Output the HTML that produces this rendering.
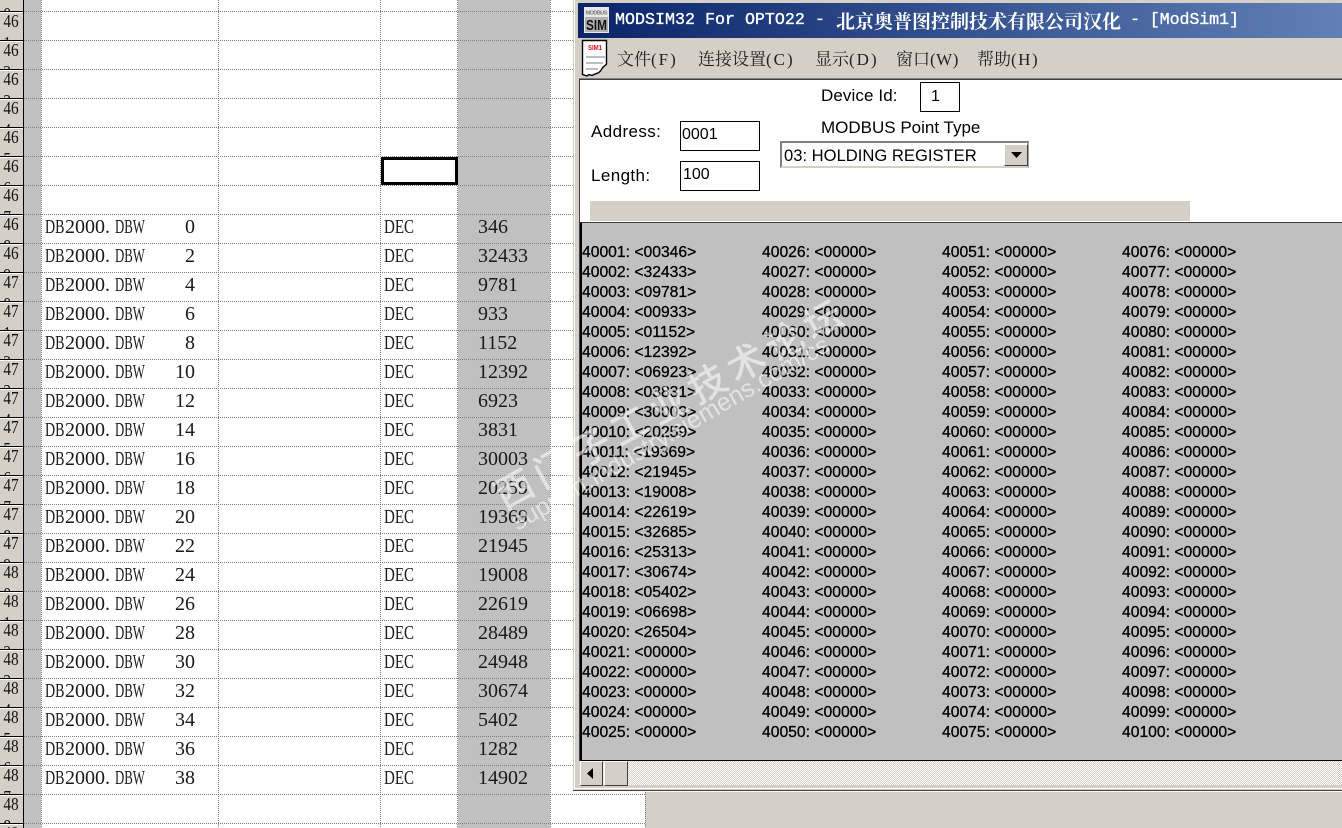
<!DOCTYPE html>
<html><head><meta charset="utf-8"><title>MODSIM32</title>
<style>
html,body{margin:0;padding:0;background:#fff}
#p{position:relative;width:1342px;height:828px;overflow:hidden;background:#fff;font-family:"Liberation Serif","Noto Serif CJK SC",serif;color:#000}
#p div,#p span,#p svg{position:absolute}
.v{width:1px;background:repeating-linear-gradient(to bottom,#808080 0 1px,transparent 1px 2px)}
.h{height:1px;background:repeating-linear-gradient(to right,#808080 0 1px,transparent 1px 2px)}
#rh{left:0;top:-17px;width:23px;height:860px;background:#d4d0c8;overflow:hidden}
#rh b{display:block;box-sizing:border-box;height:29px;width:27px;overflow:hidden;border-bottom:1px solid #000;border-top:1px solid #fff;font:400 18px/22px "Liberation Serif",serif;padding-left:4px;color:#111;transform:scaleX(.85);transform-origin:0 0}
#rh b::before{content:"";display:block;margin-top:-3px}
.t{font-size:20px;line-height:29px;white-space:nowrap;color:#1a1a1a}
.t i{display:inline-block;font-style:normal;transform-origin:0 50%;height:29px;vertical-align:top}
.a{width:20px;transform:scaleX(.7)}
.c{width:30px;transform:scaleX(.64)}
.d{width:30px;transform:scaleX(.75)}
.o{width:10px}
.m{font:400 15.7px/20px "Liberation Sans",sans-serif;white-space:nowrap;top:243px;color:#000;-webkit-text-stroke:.3px #000}
.s{font:400 17px/20px "Liberation Sans",sans-serif;white-space:nowrap;color:#000}
.box{background:#fff;border:1px solid #000;box-sizing:border-box}
.me{font:400 17px/20px "Noto Serif CJK SC",serif;color:#222;top:48px;white-space:nowrap}
.me u{text-decoration:none;font:400 17px/20px "Liberation Serif",serif;letter-spacing:2px}
.ti{color:#fff;top:10px;line-height:22px;white-space:nowrap}
.la{font:400 16.67px/22px "Liberation Mono",monospace;-webkit-text-stroke:.35px #fff}
.wm{color:rgba(255,255,255,.55);white-space:nowrap;transform-origin:0 0}
</style></head><body><div id="p">

<div style="left:24px;top:0;width:17px;height:828px;background:#c0c0c0"></div>
<div style="left:458px;top:0;width:92px;height:828px;background:#c0c0c0"></div>
<div style="left:23px;top:0;width:1px;height:828px;background:#000"></div>

<div id="rh"><b>46<br>0</b><b>46<br>1</b><b>46<br>2</b><b>46<br>3</b><b>46<br>4</b><b>46<br>5</b><b>46<br>6</b><b>46<br>7</b><b>46<br>8</b><b>46<br>9</b><b>47<br>0</b><b>47<br>1</b><b>47<br>2</b><b>47<br>3</b><b>47<br>4</b><b>47<br>5</b><b>47<br>6</b><b>47<br>7</b><b>47<br>8</b><b>47<br>9</b><b>48<br>0</b><b>48<br>1</b><b>48<br>2</b><b>48<br>3</b><b>48<br>4</b><b>48<br>5</b><b>48<br>6</b><b>48<br>7</b><b>48<br>8</b><b>48<br>9</b></div>

<div class="v" style="left:41px;top:0;height:828px"></div>
<div class="v" style="left:218px;top:0;height:828px"></div>
<div class="v" style="left:380px;top:0;height:828px"></div>
<div class="v" style="left:457px;top:0;height:828px"></div>
<div class="v" style="left:550px;top:0;height:828px"></div>

<div class="h" style="left:24px;width:630px;top:11px"></div><div class="h" style="left:24px;width:630px;top:40px"></div><div class="h" style="left:24px;width:630px;top:69px"></div><div class="h" style="left:24px;width:630px;top:98px"></div><div class="h" style="left:24px;width:630px;top:127px"></div><div class="h" style="left:24px;width:630px;top:156px"></div><div class="h" style="left:24px;width:630px;top:185px"></div><div class="h" style="left:24px;width:630px;top:214px"></div><div class="h" style="left:24px;width:630px;top:243px"></div><div class="h" style="left:24px;width:630px;top:272px"></div><div class="h" style="left:24px;width:630px;top:301px"></div><div class="h" style="left:24px;width:630px;top:330px"></div><div class="h" style="left:24px;width:630px;top:359px"></div><div class="h" style="left:24px;width:630px;top:388px"></div><div class="h" style="left:24px;width:630px;top:417px"></div><div class="h" style="left:24px;width:630px;top:446px"></div><div class="h" style="left:24px;width:630px;top:475px"></div><div class="h" style="left:24px;width:630px;top:504px"></div><div class="h" style="left:24px;width:630px;top:533px"></div><div class="h" style="left:24px;width:630px;top:562px"></div><div class="h" style="left:24px;width:630px;top:591px"></div><div class="h" style="left:24px;width:630px;top:620px"></div><div class="h" style="left:24px;width:630px;top:649px"></div><div class="h" style="left:24px;width:630px;top:678px"></div><div class="h" style="left:24px;width:630px;top:707px"></div><div class="h" style="left:24px;width:630px;top:736px"></div><div class="h" style="left:24px;width:630px;top:765px"></div><div class="h" style="left:24px;width:630px;top:794px"></div><div class="h" style="left:24px;width:630px;top:823px"></div>

<div style="left:381px;top:157px;width:77px;height:28px;box-sizing:border-box;border:3px solid #000;background:#fff"></div>

<div class="t" style="left:45px;top:213px">
<i class="a">DB</i>2000<i class="o">.</i><i class="c">DBW</i><br>
<i class="a">DB</i>2000<i class="o">.</i><i class="c">DBW</i><br>
<i class="a">DB</i>2000<i class="o">.</i><i class="c">DBW</i><br>
<i class="a">DB</i>2000<i class="o">.</i><i class="c">DBW</i><br>
<i class="a">DB</i>2000<i class="o">.</i><i class="c">DBW</i><br>
<i class="a">DB</i>2000<i class="o">.</i><i class="c">DBW</i><br>
<i class="a">DB</i>2000<i class="o">.</i><i class="c">DBW</i><br>
<i class="a">DB</i>2000<i class="o">.</i><i class="c">DBW</i><br>
<i class="a">DB</i>2000<i class="o">.</i><i class="c">DBW</i><br>
<i class="a">DB</i>2000<i class="o">.</i><i class="c">DBW</i><br>
<i class="a">DB</i>2000<i class="o">.</i><i class="c">DBW</i><br>
<i class="a">DB</i>2000<i class="o">.</i><i class="c">DBW</i><br>
<i class="a">DB</i>2000<i class="o">.</i><i class="c">DBW</i><br>
<i class="a">DB</i>2000<i class="o">.</i><i class="c">DBW</i><br>
<i class="a">DB</i>2000<i class="o">.</i><i class="c">DBW</i><br>
<i class="a">DB</i>2000<i class="o">.</i><i class="c">DBW</i><br>
<i class="a">DB</i>2000<i class="o">.</i><i class="c">DBW</i><br>
<i class="a">DB</i>2000<i class="o">.</i><i class="c">DBW</i><br>
<i class="a">DB</i>2000<i class="o">.</i><i class="c">DBW</i><br>
<i class="a">DB</i>2000<i class="o">.</i><i class="c">DBW</i>
</div>
<div class="t" style="left:165px;width:30px;top:213px;text-align:right">0<br>2<br>4<br>6<br>8<br>10<br>12<br>14<br>16<br>18<br>20<br>22<br>24<br>26<br>28<br>30<br>32<br>34<br>36<br>38</div>
<div class="t" style="left:384px;top:213px"><i class="d">DEC</i><br><i class="d">DEC</i><br><i class="d">DEC</i><br><i class="d">DEC</i><br><i class="d">DEC</i><br><i class="d">DEC</i><br><i class="d">DEC</i><br><i class="d">DEC</i><br><i class="d">DEC</i><br><i class="d">DEC</i><br><i class="d">DEC</i><br><i class="d">DEC</i><br><i class="d">DEC</i><br><i class="d">DEC</i><br><i class="d">DEC</i><br><i class="d">DEC</i><br><i class="d">DEC</i><br><i class="d">DEC</i><br><i class="d">DEC</i><br><i class="d">DEC</i></div>
<div class="t" style="left:478px;top:213px">346<br>32433<br>9781<br>933<br>1152<br>12392<br>6923<br>3831<br>30003<br>20259<br>19369<br>21945<br>19008<br>22619<br>28489<br>24948<br>30674<br>5402<br>1282<br>14902</div>

<div style="left:645px;top:792px;width:697px;height:36px;background:#d4d0c8"></div>
<div class="v" style="left:645px;top:792px;height:36px"></div>

<!-- window -->
<div style="left:573px;top:0;width:769px;height:791px;background:#d4d0c8;border-bottom:1px solid #404040;box-sizing:border-box"></div>
<div style="left:574px;top:0;width:1px;height:789px;background:#fff"></div>
<div style="left:574px;top:788px;width:768px;height:1px;background:#fff"></div>

<div style="left:578px;top:3px;width:764px;height:35px;background:linear-gradient(to right,#0a246a,#6080b6)"></div>
<svg style="left:584px;top:7px" width="25" height="26" viewBox="0 0 25 26">
<rect width="25" height="26" fill="#e8e8e8"/>
<text x="1.5" y="7.5" font-family="Liberation Sans" font-size="5.6" font-weight="700" fill="#777" textLength="22">MODBUS</text>
<rect x="1" y="10" width="23" height="15" fill="#b0b0b0"/>
<text x="2" y="23" font-family="Liberation Sans" font-size="15" font-weight="700" fill="#111" textLength="21" lengthAdjust="spacingAndGlyphs">SIM</text>
</svg>
<span class="ti la" style="left:615px">MODSIM32 For OPTO22 -</span>
<span class="ti" style="left:836px;font:700 19px/22px 'Noto Serif CJK SC',serif;letter-spacing:0">北京奥普图控制技术有限公司汉化</span>
<span class="ti la" style="left:1130px;letter-spacing:-.1px">- [ModSim1]</span>

<svg style="left:581px;top:39px" width="27" height="39" viewBox="0 0 27 39">
<path d="M1.5 1.5H25.5V25C24 27 22.5 27 21 29.5C19.5 33 17 34.5 14 35L11 36.5L8 35.5L6 37L1.5 35.5Z" fill="#fff" stroke="#000" stroke-width="1.4"/>
<text x="7" y="11" font-family="Liberation Sans" font-size="7.5" font-weight="700" fill="#e01020" textLength="14" lengthAdjust="spacingAndGlyphs">SIM1</text>
<path d="M5 18H24M5 24H22M5 30H17" stroke="#a8a8a8" stroke-width="1.4" fill="none"/>
</svg>

<span class="me" style="left:617px">文件<u>(F)</u></span>
<span class="me" style="left:698px">连接设置<u>(C)</u></span>
<span class="me" style="left:815px">显示<u>(D)</u></span>
<span class="me" style="left:896px">窗口<u style="letter-spacing:.5px">(W)</u></span>
<span class="me" style="left:977px">帮助<u style="letter-spacing:1.5px">(H)</u></span>

<div style="left:579px;top:78px;width:763px;height:1px;background:#808080"></div>
<div style="left:579px;top:79px;width:763px;height:1px;background:#404040"></div>
<div style="left:579px;top:79px;width:1px;height:682px;background:#404040"></div>
<div style="left:580px;top:80px;width:762px;height:142px;background:#fff"></div>

<span class="s" style="left:821px;top:86px;letter-spacing:.1px">Device Id:</span>
<div class="box" style="left:920px;top:82px;width:40px;height:30px"></div>
<span class="s" style="left:931px;top:87px;font-size:16px">1</span>
<span class="s" style="left:591px;top:122px;letter-spacing:.4px">Address:</span>
<div class="box" style="left:680px;top:121px;width:80px;height:30px"></div>
<span class="s" style="left:682px;top:125px;font-size:16px">0001</span>
<span class="s" style="left:591px;top:166px;letter-spacing:.4px">Length:</span>
<div class="box" style="left:680px;top:161px;width:80px;height:30px"></div>
<span class="s" style="left:683px;top:165px;font-size:16px">100</span>
<span class="s" style="left:821px;top:118px">MODBUS Point Type</span>

<div style="left:780px;top:141px;width:249px;height:27px;box-sizing:border-box;background:#fff;border:2px solid;border-color:#808080 #a0a0a0 #d4d0c8 #808080"></div>
<span class="s" style="left:784px;top:146px;font-size:16.6px">03: HOLDING REGISTER</span>
<div style="left:1004px;top:144px;width:24px;height:22px;box-sizing:border-box;background:#d4d0c8;border:1px solid;border-color:#fff #404040 #404040 #fff"></div>
<svg style="left:1010px;top:152px" width="13" height="7"><path d="M1 0H12L6.5 6Z" fill="#000"/></svg>

<div style="left:590px;top:201px;width:600px;height:20px;background:#d4d0c8"></div>

<div style="left:580px;top:222px;width:762px;height:539px;background:#c0c0c0;box-sizing:border-box;border-top:1px solid #404040;border-left:2px solid #000;border-bottom:1px solid #000"></div>

<div class="m" style="left:582px">40001: &lt;00346&gt;<br>40002: &lt;32433&gt;<br>40003: &lt;09781&gt;<br>40004: &lt;00933&gt;<br>40005: &lt;01152&gt;<br>40006: &lt;12392&gt;<br>40007: &lt;06923&gt;<br>40008: &lt;03831&gt;<br>40009: &lt;30003&gt;<br>40010: &lt;20259&gt;<br>40011: &lt;19369&gt;<br>40012: &lt;21945&gt;<br>40013: &lt;19008&gt;<br>40014: &lt;22619&gt;<br>40015: &lt;32685&gt;<br>40016: &lt;25313&gt;<br>40017: &lt;30674&gt;<br>40018: &lt;05402&gt;<br>40019: &lt;06698&gt;<br>40020: &lt;26504&gt;<br>40021: &lt;00000&gt;<br>40022: &lt;00000&gt;<br>40023: &lt;00000&gt;<br>40024: &lt;00000&gt;<br>40025: &lt;00000&gt;</div>
<div class="m" style="left:762px">40026: &lt;00000&gt;<br>40027: &lt;00000&gt;<br>40028: &lt;00000&gt;<br>40029: &lt;00000&gt;<br>40030: &lt;00000&gt;<br>40031: &lt;00000&gt;<br>40032: &lt;00000&gt;<br>40033: &lt;00000&gt;<br>40034: &lt;00000&gt;<br>40035: &lt;00000&gt;<br>40036: &lt;00000&gt;<br>40037: &lt;00000&gt;<br>40038: &lt;00000&gt;<br>40039: &lt;00000&gt;<br>40040: &lt;00000&gt;<br>40041: &lt;00000&gt;<br>40042: &lt;00000&gt;<br>40043: &lt;00000&gt;<br>40044: &lt;00000&gt;<br>40045: &lt;00000&gt;<br>40046: &lt;00000&gt;<br>40047: &lt;00000&gt;<br>40048: &lt;00000&gt;<br>40049: &lt;00000&gt;<br>40050: &lt;00000&gt;</div>
<div class="m" style="left:942px">40051: &lt;00000&gt;<br>40052: &lt;00000&gt;<br>40053: &lt;00000&gt;<br>40054: &lt;00000&gt;<br>40055: &lt;00000&gt;<br>40056: &lt;00000&gt;<br>40057: &lt;00000&gt;<br>40058: &lt;00000&gt;<br>40059: &lt;00000&gt;<br>40060: &lt;00000&gt;<br>40061: &lt;00000&gt;<br>40062: &lt;00000&gt;<br>40063: &lt;00000&gt;<br>40064: &lt;00000&gt;<br>40065: &lt;00000&gt;<br>40066: &lt;00000&gt;<br>40067: &lt;00000&gt;<br>40068: &lt;00000&gt;<br>40069: &lt;00000&gt;<br>40070: &lt;00000&gt;<br>40071: &lt;00000&gt;<br>40072: &lt;00000&gt;<br>40073: &lt;00000&gt;<br>40074: &lt;00000&gt;<br>40075: &lt;00000&gt;</div>
<div class="m" style="left:1122px">40076: &lt;00000&gt;<br>40077: &lt;00000&gt;<br>40078: &lt;00000&gt;<br>40079: &lt;00000&gt;<br>40080: &lt;00000&gt;<br>40081: &lt;00000&gt;<br>40082: &lt;00000&gt;<br>40083: &lt;00000&gt;<br>40084: &lt;00000&gt;<br>40085: &lt;00000&gt;<br>40086: &lt;00000&gt;<br>40087: &lt;00000&gt;<br>40088: &lt;00000&gt;<br>40089: &lt;00000&gt;<br>40090: &lt;00000&gt;<br>40091: &lt;00000&gt;<br>40092: &lt;00000&gt;<br>40093: &lt;00000&gt;<br>40094: &lt;00000&gt;<br>40095: &lt;00000&gt;<br>40096: &lt;00000&gt;<br>40097: &lt;00000&gt;<br>40098: &lt;00000&gt;<br>40099: &lt;00000&gt;<br>40100: &lt;00000&gt;</div>

<!-- scrollbar -->
<div style="left:580px;top:761px;width:762px;height:24px;background:repeating-conic-gradient(#fff 0 25%,#d4d0c8 0 50%) 0 0/2px 2px"></div>
<div style="left:580px;top:761px;width:23px;height:25px;box-sizing:border-box;background:#d4d0c8;border:1px solid;border-color:#fff #404040 #404040 #fff"></div>
<svg style="left:586px;top:767px" width="8" height="13"><path d="M7 1V12L1 6.5Z" fill="#000"/></svg>
<div style="left:604px;top:761px;width:24px;height:25px;box-sizing:border-box;background:#d4d0c8;border:1px solid;border-color:#fff #404040 #404040 #fff"></div>

<!-- watermark -->
<div class="wm" style="left:486px;top:477px;font:500 38px/44px 'Noto Sans CJK SC',sans-serif;letter-spacing:6px;transform:rotate(-28.7deg)">西门子工业技术论坛</div>
<div class="wm" style="left:506px;top:511px;font:400 25px/30px 'Liberation Sans',sans-serif;transform:rotate(-30deg)">support.industry.siemens.com/cs</div>

</div></body></html>
